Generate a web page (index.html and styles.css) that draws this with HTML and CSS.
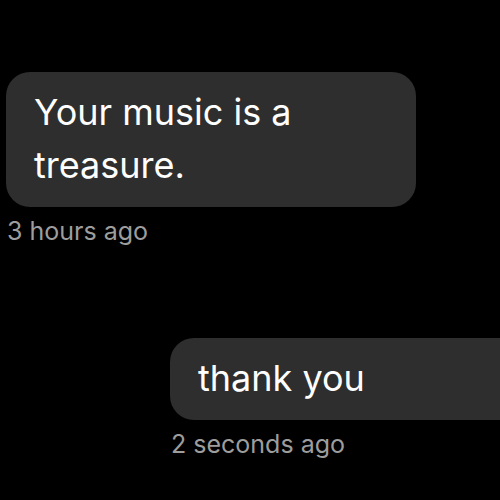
FILE: index.html
```html
<!DOCTYPE html>
<html lang="en">
<head>
    <meta charset="UTF-8">
    <title>Messages</title>
    <link rel="stylesheet" href="styles.css">
</head>
<body>
    <div class="thread">
        <div class="message received">
            <div class="bubble">Your music is a treasure.</div>
            <span class="time">3 hours ago</span>
        </div>
        <div class="message sent">
            <div class="bubble">thank you</div>
            <span class="time">2 seconds ago</span>
        </div>
    </div>
</body>
</html>
```
FILE: styles.css
```css
html, body {
    margin: 0;
    height: 100%;
    background: #000;
    overflow: hidden;
}
body {
    font-family: Inter, "Noto Sans", sans-serif;
    color: #fff;
}
.thread {
    display: flex;
    flex-direction: column;
    gap: 91px;
    padding: 72px 0 0 6px;
}
.message {
    display: flex;
    flex-direction: column;
    align-items: flex-start;
}
.bubble {
    background: #2e2e2e;
    border-radius: 24px;
    padding: 14px 28px 15px;
    font-size: 36px;
    line-height: 53px;
    box-sizing: border-box;
}
.received .bubble {
    width: 410px;
}
.sent {
    margin-left: 164px;
}
.sent .bubble {
    width: 380px;
}
.time {
    margin-top: 8px;
    padding-left: 1px;
    font-size: 25px;
    line-height: 32px;
    color: #9d9d9d;
}
```
